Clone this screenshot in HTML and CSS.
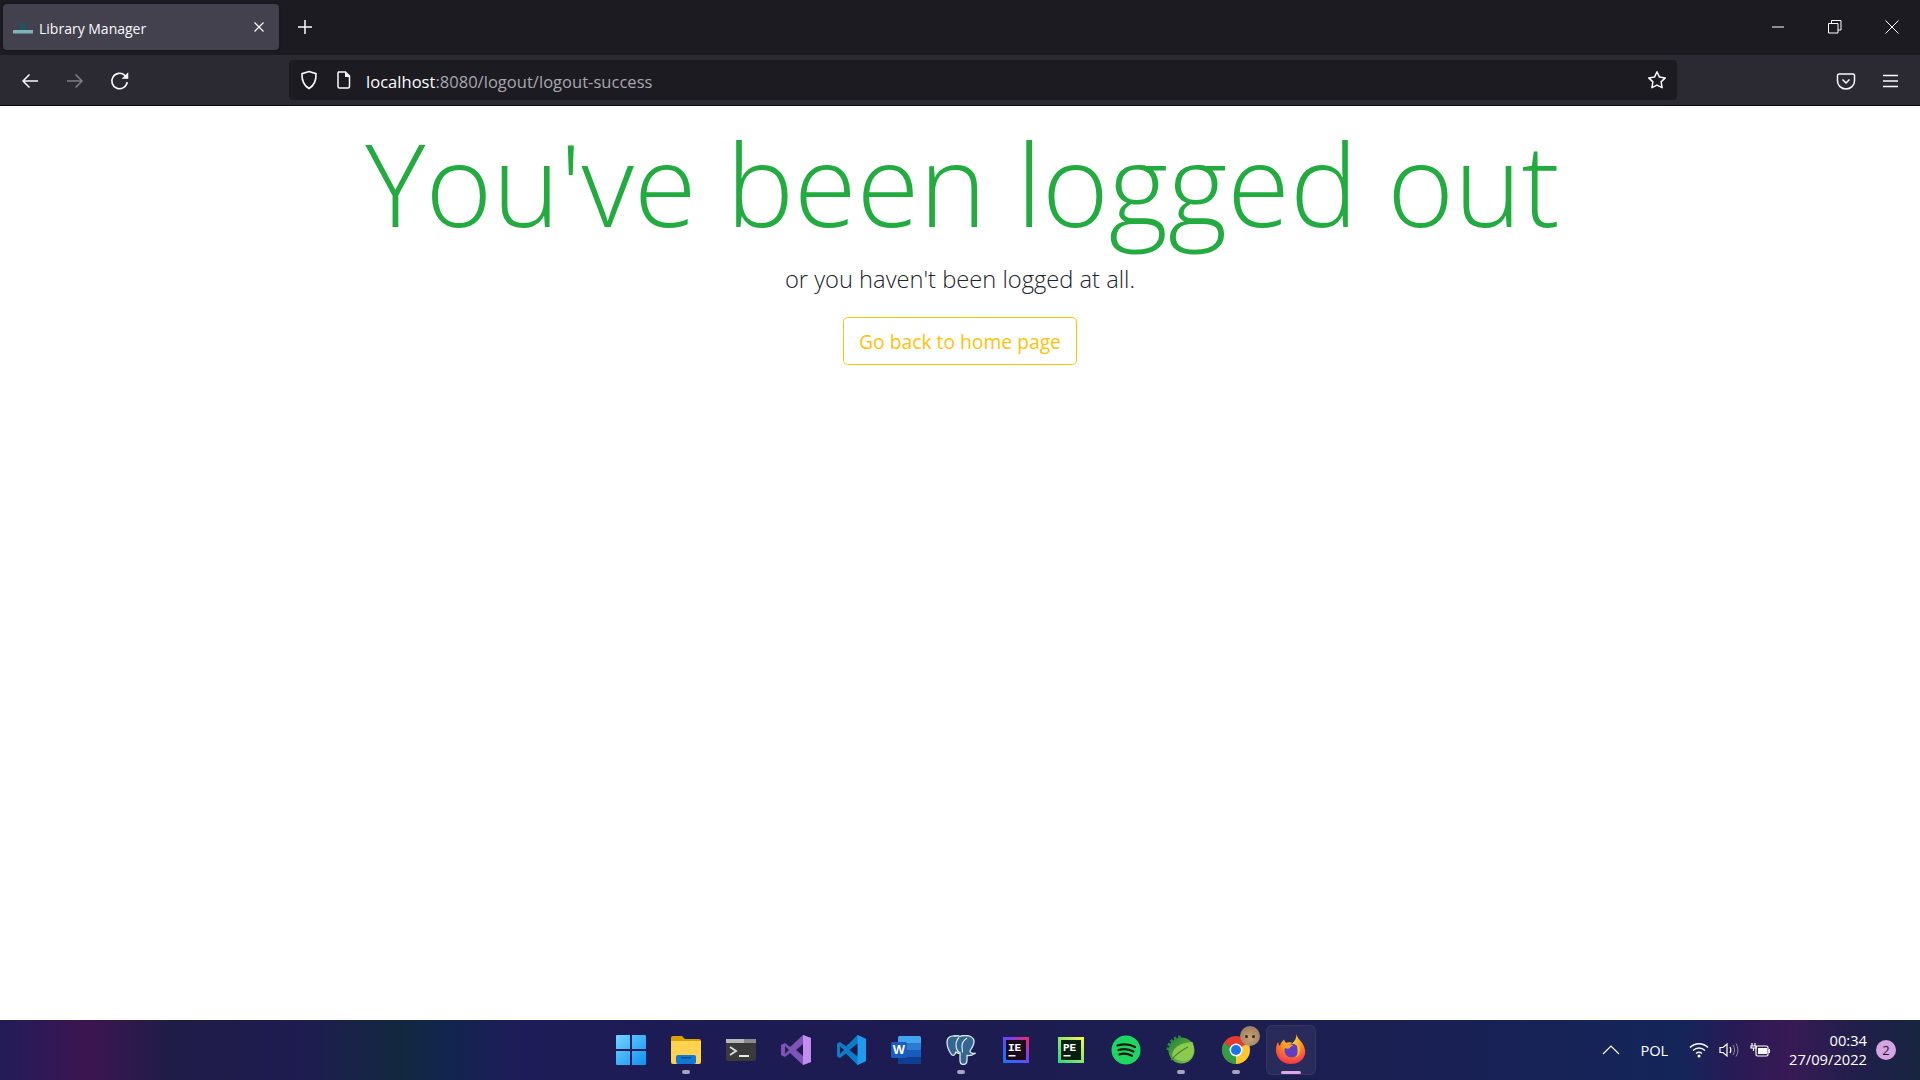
FILE: index.html
```html
<!DOCTYPE html>
<html lang="en">
<head>
<meta charset="utf-8">
<title>Library Manager</title>
<link rel="stylesheet" href="styles.css">
</head>
<body>
<div class="screen">
  <header class="tabbar">
    <div class="tab">
      <svg class="favicon" viewBox="0 0 20 14"><rect x="0" y="9" width="20" height="3.500" fill="#7fb4ba"/><rect x="7" y="2" width="5" height="7" fill="#1f5560"/></svg>
      <span class="tab-title">Library Manager</span>
      <svg class="tab-close" viewBox="0 0 12 12"><path d="M1.500 1.500l9 9M10.500 1.500l-9 9" stroke="#fbfbfe" stroke-width="1.200" fill="none"/></svg>
    </div>
    <button class="newtab"><svg viewBox="0 0 16 16" width="16" height="16"><path d="M8 1v14M1 8h14" stroke="#fbfbfe" stroke-width="1.500" fill="none"/></svg></button>
    <div class="spacer"></div>
    <button class="winbtn"><svg viewBox="0 0 14 14" width="14" height="14"><path d="M1 7h12" stroke="#fff" stroke-width="1"/></svg></button>
    <button class="winbtn"><svg viewBox="0 0 14 14" width="14" height="14"><path d="M.5 3.500h9.500v9.500H.5zM3.500 3.500V.5h9.500v9.500H10" stroke="#fff" stroke-width="1" fill="none"/></svg></button>
    <button class="winbtn"><svg viewBox="0 0 14 14" width="14" height="14"><path d="M.5.5l13 13M13.500.5l-13 13" stroke="#fff" stroke-width="1" fill="none"/></svg></button>
  </header>
  <nav class="toolbar">
    <button class="navbtn"><svg viewBox="0 0 20 20" width="20" height="20"><path d="M18 10H3M9.500 3.500L3 10l6.500 6.500" stroke="#fbfbfe" stroke-width="1.500" fill="none"/></svg></button>
    <button class="navbtn dim"><svg viewBox="0 0 20 20" width="20" height="20"><path d="M2 10h15M10.500 3.500L17 10l-6.500 6.500" stroke="#fbfbfe" stroke-width="1.500" fill="none"/></svg></button>
    <button class="navbtn"><svg viewBox="0 0 20 20" width="22" height="22"><path d="M16.500 11a7 7 0 1 1-2-6l2.500 2.500" stroke="#fbfbfe" stroke-width="1.500" fill="none"/><path d="M17.500 2v6h-6z" fill="#fbfbfe"/></svg></button>
    <div class="urlbar">
      <svg class="shield" viewBox="0 0 20 20" width="20" height="20"><path d="M10 1.500l7 2.200c.3 6.300-1.500 11.500-7 14.800C4.500 15.200 2.700 10 3 3.700z" stroke="#fbfbfe" stroke-width="1.600" fill="none"/></svg>
      <svg class="page" viewBox="0 0 16 18" width="16" height="18"><path d="M2.500 1h7l4 4v10.500a1.500 1.500 0 0 1-1.500 1.500H3.500A1.500 1.500 0 0 1 2 15.500v-13.500z" stroke="#fbfbfe" stroke-width="1.500" fill="none"/><path d="M9 1v5h5" fill="#fbfbfe"/></svg>
      <span class="url"><span class="url-host">localhost</span><span class="url-rest">:8080/logout/logout-success</span></span>
      <svg class="star" viewBox="0 0 20 20" width="20" height="20"><path d="M10 1.800l2.500 5.300 5.800.8-4.200 4 1 5.800L10 15.100l-5.100 2.600 1-5.800-4.200-4 5.800-.8z" stroke="#fbfbfe" stroke-width="1.500" stroke-linejoin="round" fill="none"/></svg>
    </div>
    <button class="navbtn"><svg viewBox="0 0 20 20" width="20" height="20"><path d="M3 3h14a1.500 1.500 0 0 1 1.500 1.500V10a8.500 8 0 0 1-17 0V4.500A1.500 1.500 0 0 1 3 3z" stroke="#fbfbfe" stroke-width="1.500" fill="none"/><path d="M6.500 8.500L10 12l3.500-3.500" stroke="#fbfbfe" stroke-width="1.500" fill="none"/></svg></button>
    <button class="navbtn"><svg viewBox="0 0 20 20" width="20" height="20"><path d="M2 4.500h15M2 10h15M2 15.500h15" stroke="#fbfbfe" stroke-width="1.500" fill="none"/></svg></button>
  </nav>
  <main class="page-body">
    <h1 class="headline">You've been logged out</h1>
    <p class="lead">or you haven't been logged at all.</p>
    <a class="btn-home" href="#">Go back to home page</a>
  </main>
  <footer class="taskbar">
    <div class="task-left"></div>
    <div class="task-icons">
      <div class="task-item"><svg viewBox="0 0 30 30" width="30" height="30"><defs><linearGradient id="w" x1="0" y1="0" x2="1" y2="1"><stop offset="0" stop-color="#6fd6ff"/><stop offset="1" stop-color="#0f8ff0"/></linearGradient></defs><path d="M0 1a1 1 0 0 1 1-1h13v14H0zM16 0h13a1 1 0 0 1 1 1v13H16zM0 16h14v14H1a1 1 0 0 1-1-1zM16 16h14v13a1 1 0 0 1-1 1H16z" fill="url(#w)"/></svg></div>
      <div class="task-item running"><svg viewBox="0 0 30 28" width="30" height="28"><path d="M0 2a2 2 0 0 1 2-2h9l3 3h14a2 2 0 0 1 2 2v6H0z" fill="#d9a200"/><path d="M0 5h30v21a2 2 0 0 1-2 2H2a2 2 0 0 1-2-2z" fill="#ffd34f"/><rect x="5" y="19" width="20" height="9" rx="2" fill="#0f78d4"/><rect x="10" y="21" width="10" height="1.500" fill="#0b4f94"/></svg></div>
      <div class="task-item"><svg viewBox="0 0 30 22" width="30" height="22"><rect width="30" height="22" rx="2" fill="#3a3a3a"/><rect width="30" height="4" fill="#b8b8b8"/><rect x="18" width="12" height="4" fill="#8a8a8a"/><path d="M4 8l6 4-6 4" stroke="#d8d8d8" stroke-width="2" fill="none"/><rect x="13" y="16" width="10" height="2" fill="#e8e8e8"/></svg></div>
      <div class="task-item"><svg viewBox="0 0 30 30" width="30" height="30"><path d="M22 0l8 3v24l-8 3L9 18l-5 4-4-2V10l4-2 5 4z" fill="#7d55b8"/><path d="M22 0l8 3v24l-8 3z" fill="#c18dee"/><path d="M4 11v8l4-4z" fill="#2a1d50"/><path d="M22 9l-7 6 7 6z" fill="#23174a"/></svg></div>
      <div class="task-item"><svg viewBox="0 0 30 30" width="30" height="30"><path d="M21.500 0L30 4v22l-8.500 4L10 18.500 4 23l-3-1.500v-13L4 7l6 4.500z" fill="#0a7cc8"/><path d="M21.500 0L30 4v22l-8.500 4z" fill="#1f9cf0"/><path d="M21.500 8.500L13.500 15l8 6.500z" fill="#191a4b"/><path d="M4 11v8l4-4z" fill="#191a4b"/></svg></div>
      <div class="task-item"><svg viewBox="0 0 30 28" width="30" height="28"><rect x="7" width="23" height="28" rx="1.500" fill="#41a5ee"/><rect x="7" y="7" width="23" height="7" fill="#2b7cd3"/><rect x="7" y="14" width="23" height="7" fill="#185abd"/><rect x="7" y="21" width="23" height="7" fill="#103f91"/><rect y="6" width="16" height="16" rx="1.500" fill="#1a5cbf"/><text x="8" y="18" class="word-w">W</text></svg></div>
      <div class="task-item running"><svg viewBox="0 0 30 30" width="30" height="30"><path d="M9 1C4 .5 1 3 1 7c0 4 2 9 4 12 1 1.500 3 2 4 0l1-2c1 1 3 1.500 4 1l0 7c0 3 1.500 4.500 3.500 4.500 3 0 3.500-2.500 3.500-5v-4c3 .5 5 0 8-2-3 0-5-1-5-2.500 2-3 4-6 4-9.500 0-4-4-6-9-6-2 0-4 .5-5 1-1-.5-3-1-5-1z" fill="#336791" stroke="#dfe8f0" stroke-width="1.300"/><path d="M13 2.500c-3 3-3.500 7-2.500 11 .5 2 2 3.500 3.500 4M21 3c-3 2-5 5-5 8.500 0 2 .5 4 .5 6" stroke="#dfe8f0" stroke-width="1.200" fill="none"/></svg></div>
      <div class="task-item"><svg viewBox="0 0 26 26" width="26" height="26"><defs><linearGradient id="ie" x1="0" y1="1" x2="1" y2="0"><stop offset="0" stop-color="#087cfa"/><stop offset=".6" stop-color="#7b3ff2"/><stop offset="1" stop-color="#fe2857"/></linearGradient></defs><rect width="26" height="26" fill="url(#ie)"/><rect x="3" y="3" width="20" height="20" fill="#1a0a1c"/><text x="5" y="14" class="jb">IE</text><rect x="5.500" y="18" width="7" height="1.500" fill="#fff"/></svg></div>
      <div class="task-item"><svg viewBox="0 0 26 26" width="26" height="26"><defs><linearGradient id="pe" x1="0" y1="1" x2="1" y2="0"><stop offset="0" stop-color="#21d789"/><stop offset="1" stop-color="#fcf84a"/></linearGradient></defs><rect width="26" height="26" fill="url(#pe)"/><rect x="3" y="3" width="20" height="20" fill="#06200f"/><text x="5" y="14" class="jb">PE</text><rect x="5.500" y="18" width="7" height="1.500" fill="#fff"/></svg></div>
      <div class="task-item"><svg viewBox="0 0 30 30" width="30" height="30"><circle cx="15" cy="15" r="14.500" fill="#1ed760"/><path d="M6.500 10.500c6-1.700 12.500-1.300 17.500 1.500M7.500 15c5-1.400 10.500-1 15 1.500M8.500 19.300c4-1 8.500-.7 12.500 1.500" stroke="#191414" stroke-width="2.300" stroke-linecap="round" fill="none"/></svg></div>
      <div class="task-item running"><svg viewBox="0 0 30 30" width="30" height="30"><defs><linearGradient id="sp" x1="0" y1="0" x2="1" y2="1"><stop offset="0" stop-color="#1f7f3a"/><stop offset=".6" stop-color="#5aa83c"/><stop offset="1" stop-color="#7cc243"/></linearGradient></defs><path d="M3 15A12 12 0 0 1 15 3" fill="none" stroke="#2c8a3e" stroke-width="5" stroke-dasharray="2.400 1.600"/><circle cx="15.500" cy="15.500" r="13" fill="url(#sp)"/><path d="M6 21.500C6 13 14 7.500 26.500 7c2 6 2 11-1 15.500-3.500 5-13 5-19.500-1z" fill="#8cc94f"/><path d="M5 25c6-7 11-10 17-13" stroke="#3d8a30" stroke-width="1.300" fill="none"/></svg></div>
      <div class="task-item running"><svg viewBox="0 0 28 28" width="28" height="28"><circle cx="14" cy="14" r="14" fill="#e33b2e"/><path d="M14 14L26.100 7A14 14 0 0 1 14 28z" fill="#fcc934"/><path d="M14 14L14 28A14 14 0 0 1 1.900 7z" fill="#2f9e44"/><circle cx="14" cy="14" r="6.500" fill="#fff"/><circle cx="14" cy="14" r="5" fill="#1a73e8"/></svg><span class="avatar"><span class="eye"></span><span class="eye"></span></span></div>
      <div class="task-item active"><svg viewBox="0 0 30 30" width="30" height="30"><defs><radialGradient id="fx" cx=".55" cy=".2" r=".9"><stop offset="0" stop-color="#ffdf3b"/><stop offset=".45" stop-color="#ff8a1f"/><stop offset="1" stop-color="#f0205c"/></radialGradient></defs><path d="M20.500 0c.3 3 2.500 5 4.500 7.500 4 5 5 10 3.500 14C26.500 27 21.500 30 15 30 6.500 30 0 24 0 16c0-3 .7-6 2-8 .3 2 1 3 2 4 .5-3 2-5 4.500-6.500-.3 1.500.5 2.500 2 3.300 2-.8 4.500-.8 6 .2C19 7 20.500 4 20.500 0z" fill="url(#fx)"/><circle cx="15.500" cy="16.500" r="7" fill="#5f3dc4"/><path d="M5.500 12c3-2 9-2.500 12-.5-2 .5-3.500 1.500-4 3-3 .5-6-.5-8-2.500z" fill="#ff9c2b"/><path d="M20.500 8c3 3 4.500 7 3 11-.5 2-2 3.500-3.500 4.500 2-3 2-8 .5-15.500z" fill="#ffb52e"/></svg></div>
    </div>
    <div class="tray">
      <svg class="chev" viewBox="0 0 18 10" width="18" height="10"><path d="M1 9l8-8 8 8" stroke="#fff" stroke-width="1.200" fill="none"/></svg>
      <span class="lang">POL</span>
      <svg class="wifi" viewBox="0 0 20 16" width="20" height="16"><path d="M1 5.500c5-5 13-5 18 0M4 8.500c3.500-3.300 8.500-3.300 12 0M7 11.500c1.800-1.500 4.200-1.500 6 0" stroke="#fff" stroke-width="1.400" fill="none"/><circle cx="10" cy="14" r="1.500" fill="#fff"/></svg>
      <svg class="vol" viewBox="0 0 20 16" width="20" height="16"><path d="M1 5.500h3L8 2v12l-4-3.500H1z" stroke="#fff" stroke-width="1.200" fill="none"/><path d="M11 5c1.200 2 1.200 4 0 6" stroke="#fff" stroke-width="1.200" fill="none"/><path d="M14 3c2 3 2 7 0 10M17 1.500c2.500 4 2.500 9 0 13" stroke="#8f8aa8" stroke-width="1" fill="none"/></svg>
      <svg class="batt" viewBox="0 0 20 16" width="20" height="16"><path d="M2 1v3M5 1v3M1 4h5v2H1zM3.500 6v3" stroke="#fff" stroke-width="1.200" fill="none"/><rect x="6" y="4" width="12" height="10" rx="1.500" stroke="#fff" stroke-width="1.200" fill="none"/><rect x="8" y="6" width="9" height="6" fill="#fff"/><rect x="18.500" y="7" width="1.500" height="4" fill="#fff"/></svg>
      <div class="clock"><span>00:34</span><span>27/09/2022</span></div>
      <span class="badge">2</span>
    </div>
  </footer>
</div>
</body>
</html>
```

FILE: styles.css
```css
* { box-sizing: border-box; }
html, body { margin: 0; height: 100%; }
body { font-family: "Open Sans", "Liberation Sans", sans-serif; background: #fff; overflow: hidden; }
button { background: none; border: 0; padding: 0; display: flex; align-items: center; justify-content: center; }
svg { display: block; flex: none; }

.screen { height: 1080px; display: flex; flex-direction: column; }

.tabbar { height: 55px; flex: none; background: #1c1b22; display: flex; align-items: flex-start; padding: 4px 0 0 3px; }
.tab { width: 276px; height: 46px; background: #42414d; border-radius: 4px; display: flex; align-items: center; padding: 2px 14px 0 10px; color: #fbfbfe; font-size: 14px; box-shadow: 0 0 3px rgba(0,0,0,.4); }
.favicon { width: 20px; height: 14px; margin-right: 6px; }
.tab-title { flex: 1; }
.tab-close { width: 12px; height: 12px; margin-top: -2px; }
.newtab { width: 30px; height: 46px; margin-left: 11px; }
.spacer { flex: 1; }
.winbtn { width: 57px; height: 46px; }

.toolbar { height: 51px; flex: none; background: #2b2a33; display: flex; align-items: center; padding: 2px 7px 0; border-bottom: 1px solid #0c0c0d; }
.navbtn { width: 45px; height: 40px; }
.dim { opacity: .4; }
.urlbar { flex: 1; height: 40px; margin: -2px 146px 0 147px; background: #1c1b22; border-radius: 4px; display: flex; align-items: center; padding: 0 10px; font-size: 16.500px; }
.shield { margin-right: 17px; }
.page { margin-right: 14px; }
.url { flex: 1; padding-top: 2px; letter-spacing: .03px; }
.url-host { color: #fbfbfe; }
.url-rest { color: #a8a8ad; }

.page-body { flex: 1; text-align: center; color: #212529; padding-top: 9px; }
.headline { margin: 0; padding-left: 5px; font-size: 114px; line-height: 1.2; font-weight: 300; color: #22ac40; }
.lead { margin: 9px 0 0; font-size: 23.700px; line-height: 36px; font-weight: 300; }
.btn-home { display: inline-block; margin-top: 20px; width: 234px; height: 48px; line-height: 47px; border: 1px solid #ffc107; border-radius: 4.800px; color: #ffc107; font-size: 19.300px; text-decoration: none; }

.taskbar { height: 60px; flex: none; display: grid; grid-template-columns: 1fr auto 1fr; align-items: center;
  background: linear-gradient(90deg, #221c55 0, #2c1958 30px, #3c1550 90px, #1f1c48 170px, #1e1c50 300px, #13283f 400px, #11244f 450px, #1e1c58 520px, #1c1b52 800px, #1c1e50 1300px, #14255a 1680px, #2a1a55 1740px, #381a55 1790px, #1f1f4a 1860px, #18243f 1920px); }
.task-icons { display: flex; padding-left: 1px; }
.task-item { width: 55px; height: 50px; display: flex; align-items: center; justify-content: center; position: relative; }
.running::after, .active::after { content: ""; position: absolute; bottom: 1px; left: 24px; width: 8px; height: 4px; border-radius: 2px; background: #a8a4c0; }
.active::before { content: ""; position: absolute; inset: 0 2px 0 3px; background: rgba(255,255,255,.06); border: 1px solid rgba(255,255,255,.05); border-radius: 6px; }
.active svg { position: relative; top: -1px; }
.active::after { left: 18px; width: 20px; height: 3px; background: #d8a8e8; }
.word-w { font: 700 13px "Liberation Sans", sans-serif; fill: #fff; text-anchor: middle; }
.jb { font: 700 11px "Liberation Mono", monospace; fill: #fff; }
.avatar { position: absolute; top: 1px; right: 3px; width: 20px; height: 20px; border-radius: 50%; background: radial-gradient(circle at 50% 60%, #c9a27a, #8f7458); display: flex; justify-content: center; align-items: center; gap: 4px; }
.eye { width: 3px; height: 3px; border-radius: 50%; background: #3d2a1c; }

.tray { display: flex; align-items: center; justify-content: flex-end; color: #fff; padding-right: 24px; font-size: 14.700px; }
.chev { margin-right: 20px; }
.lang { margin-right: 21px; letter-spacing: -.1px; }
.wifi { margin-right: 10px; }
.vol { margin-right: 11px; }
.batt { margin-right: 19px; }
.clock { display: flex; flex-direction: column; align-items: flex-end; line-height: 19px; }
.badge { margin-left: 9px; width: 20px; height: 20px; border-radius: 50%; background: #d7a3e3; color: #1c1b30; font-size: 13px; line-height: 20px; text-align: center; }
```
